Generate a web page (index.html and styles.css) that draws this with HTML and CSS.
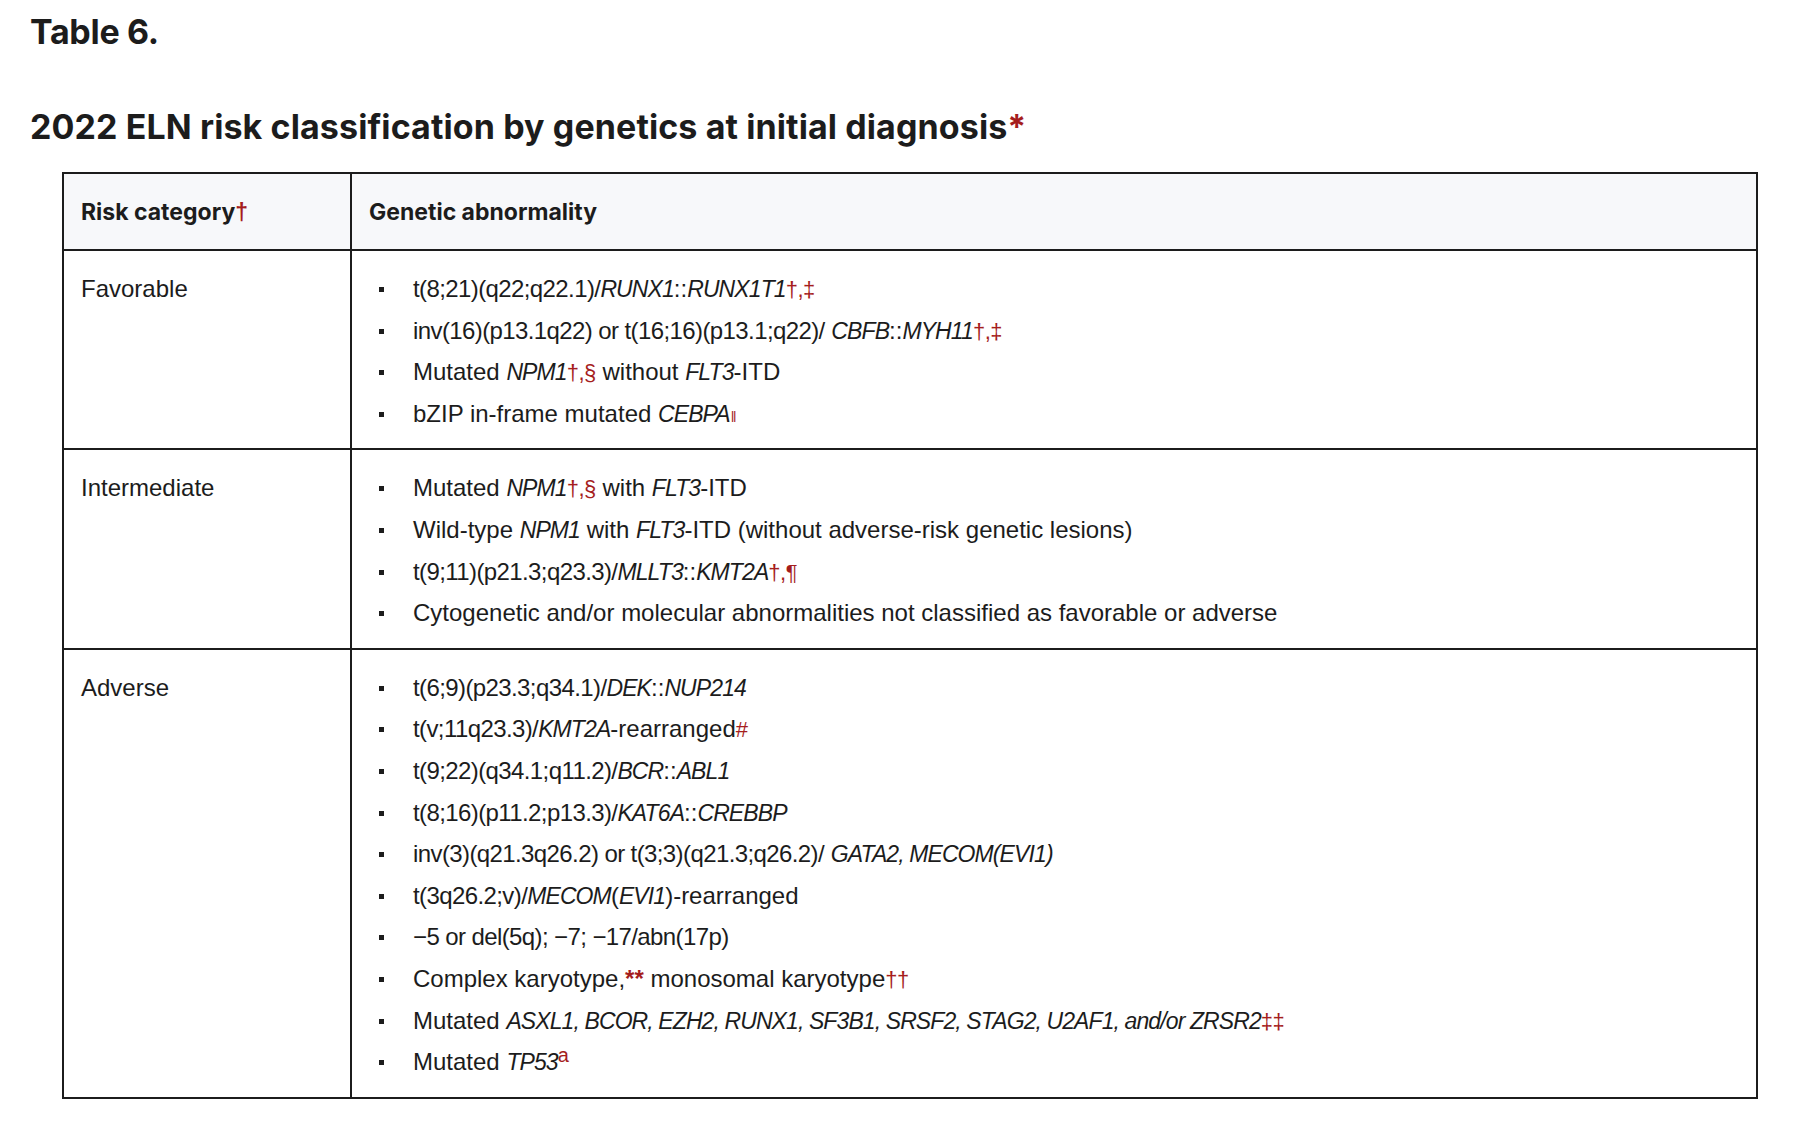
FILE: index.html
```html
<!DOCTYPE html>
<html lang="en">
<head>
<meta charset="utf-8">
<title>Table 6. 2022 ELN risk classification</title>
<link rel="stylesheet" href="styles.css">
</head>
<body>
<div class="page">
  <h2 class="label">Table 6.</h2>
  <h3 class="caption">2022 ELN risk classification by genetics at initial diagnosis<span class="fn">*</span></h3>
  <table class="eln">
    <thead>
      <tr>
        <th class="col-risk">Risk category<span class="fn">†</span></th>
        <th>Genetic abnormality</th>
      </tr>
    </thead>
    <tbody>
      <tr>
        <td class="col-risk">Favorable</td>
        <td>
          <ul class="items">
            <li><span class="cyto">t(8;21)(q22;q22.1)/</span><i>RUNX1</i>::<i>RUNX1T1</i><span class="fn">†,‡</span></li>
            <li><span class="cyto">inv(16)(p13.1q22) or t(16;16)(p13.1;q22)/</span> <i>CBFB</i>::<i>MYH11</i><span class="fn">†,‡</span></li>
            <li>Mutated <i>NPM1</i><span class="fn">†,§</span> without <i>FLT3</i>-ITD</li>
            <li>bZIP in-frame mutated <i>CEBPA</i><span class="fn small">‖</span></li>
          </ul>
        </td>
      </tr>
      <tr>
        <td class="col-risk">Intermediate</td>
        <td>
          <ul class="items">
            <li>Mutated <i>NPM1</i><span class="fn">†,§</span> with <i>FLT3</i>-ITD</li>
            <li>Wild-type <i>NPM1</i> with <i>FLT3</i>-ITD (without adverse-risk genetic lesions)</li>
            <li><span class="cyto">t(9;11)(p21.3;q23.3)/</span><i>MLLT3</i>::<i>KMT2A</i><span class="fn">†,¶</span></li>
            <li>Cytogenetic and/or molecular abnormalities not classified as favorable or adverse</li>
          </ul>
        </td>
      </tr>
      <tr>
        <td class="col-risk">Adverse</td>
        <td>
          <ul class="items">
            <li><span class="cyto">t(6;9)(p23.3;q34.1)/</span><i>DEK</i>::<i>NUP214</i></li>
            <li><span class="cyto">t(v;11q23.3)/</span><i>KMT2A</i>-rearranged<span class="fn">#</span></li>
            <li><span class="cyto">t(9;22)(q34.1;q11.2)/</span><i>BCR</i>::<i>ABL1</i></li>
            <li><span class="cyto">t(8;16)(p11.2;p13.3)/</span><i>KAT6A</i>::<i>CREBBP</i></li>
            <li><span class="cyto">inv(3)(q21.3q26.2) or t(3;3)(q21.3;q26.2)/</span> <i>GATA2, MECOM(EVI1)</i></li>
            <li><span class="cyto">t(3q26.2;v)/</span><i>MECOM</i>(<i>EVI1</i>)-rearranged</li>
            <li><span class="cyto">−5 or del(5q); −7; −17/abn(17p)</span></li>
            <li>Complex karyotype,<span class="fn ast">**</span> monosomal karyotype<span class="fn">††</span></li>
            <li>Mutated <i>ASXL1, BCOR, EZH2, RUNX1, SF3B1, SRSF2, STAG2, U2AF1, and/or ZRSR2</i><span class="fn">‡‡</span></li>
            <li>Mutated <i>TP53</i><sup class="fn">a</sup></li>
          </ul>
        </td>
      </tr>
    </tbody>
  </table>
</div>
</body>
</html>
```
FILE: styles.css
```css
html, body {
  margin: 0;
  padding: 0;
  background: #ffffff;
}

body {
  font-family: "Liberation Sans", Arial, sans-serif;
  color: #1c1c1c;
}

.page {
  padding: 10px 0 40px 30px;
}

.label {
  margin: 0;
  font-family: "Inter", "Liberation Sans", sans-serif;
  font-size: 34px;
  letter-spacing: -0.3px;
  line-height: 43px;
  font-weight: 700;
}

.caption {
  margin: 54px 0 25px;
  font-family: "Inter", "Liberation Sans", sans-serif;
  font-size: 34px;
  letter-spacing: 0.1px;
  line-height: 40px;
  font-weight: 700;
}

.fn {
  color: #a51d1d;
  font-family: "Liberation Sans", Arial, sans-serif;
  font-style: normal;
}

.caption .fn {
  font-family: "Inter", "Liberation Sans", sans-serif;
}

.items .fn {
  font-size: 22px;
  line-height: 1;
  letter-spacing: -0.5px;
}

.items .fn.ast {
  font-size: 24px;
  font-weight: 700;
  letter-spacing: 0;
}

.items .fn.small {
  font-size: 14px;
  line-height: 0;
  letter-spacing: 0;
  margin-left: 1px;
}

.items sup.fn {
  font-size: 20px;
  line-height: 0;
  vertical-align: 8px;
  letter-spacing: 0;
}

.items i {
  font-size: 23px;
  line-height: 1;
  letter-spacing: -0.9px;
}

.items .cyto {
  letter-spacing: -0.6px;
}

.eln {
  margin-left: 32px;
  width: 1696px;
  border-collapse: collapse;
  border: 2px solid #1c1c1c;
  font-size: 24px;
}

.eln th,
.eln td {
  border: 2px solid #1c1c1c;
  text-align: left;
}

.eln th {
  background: #f7f8fa;
  font-family: "Inter", "Liberation Sans", sans-serif;
  font-weight: 700;
  font-size: 23px;
  height: 75px;
  padding: 0 16px 0 17px;
  vertical-align: middle;
}

.eln th .fn {
  font-weight: 700;
}

.eln td {
  vertical-align: top;
  padding: 17px 16px 14px 17px;
  line-height: 41.6px;
}

.eln .col-risk {
  width: 253px;
}

.items {
  list-style: none;
  margin: 0;
  padding: 0;
}

.items li {
  line-height: 41.6px;
  white-space: nowrap;
}

.items li::before {
  content: "";
  display: inline-block;
  width: 5px;
  height: 5px;
  background: #1c1c1c;
  vertical-align: 5px;
  margin-left: 10px;
  margin-right: 29px;
}
```
